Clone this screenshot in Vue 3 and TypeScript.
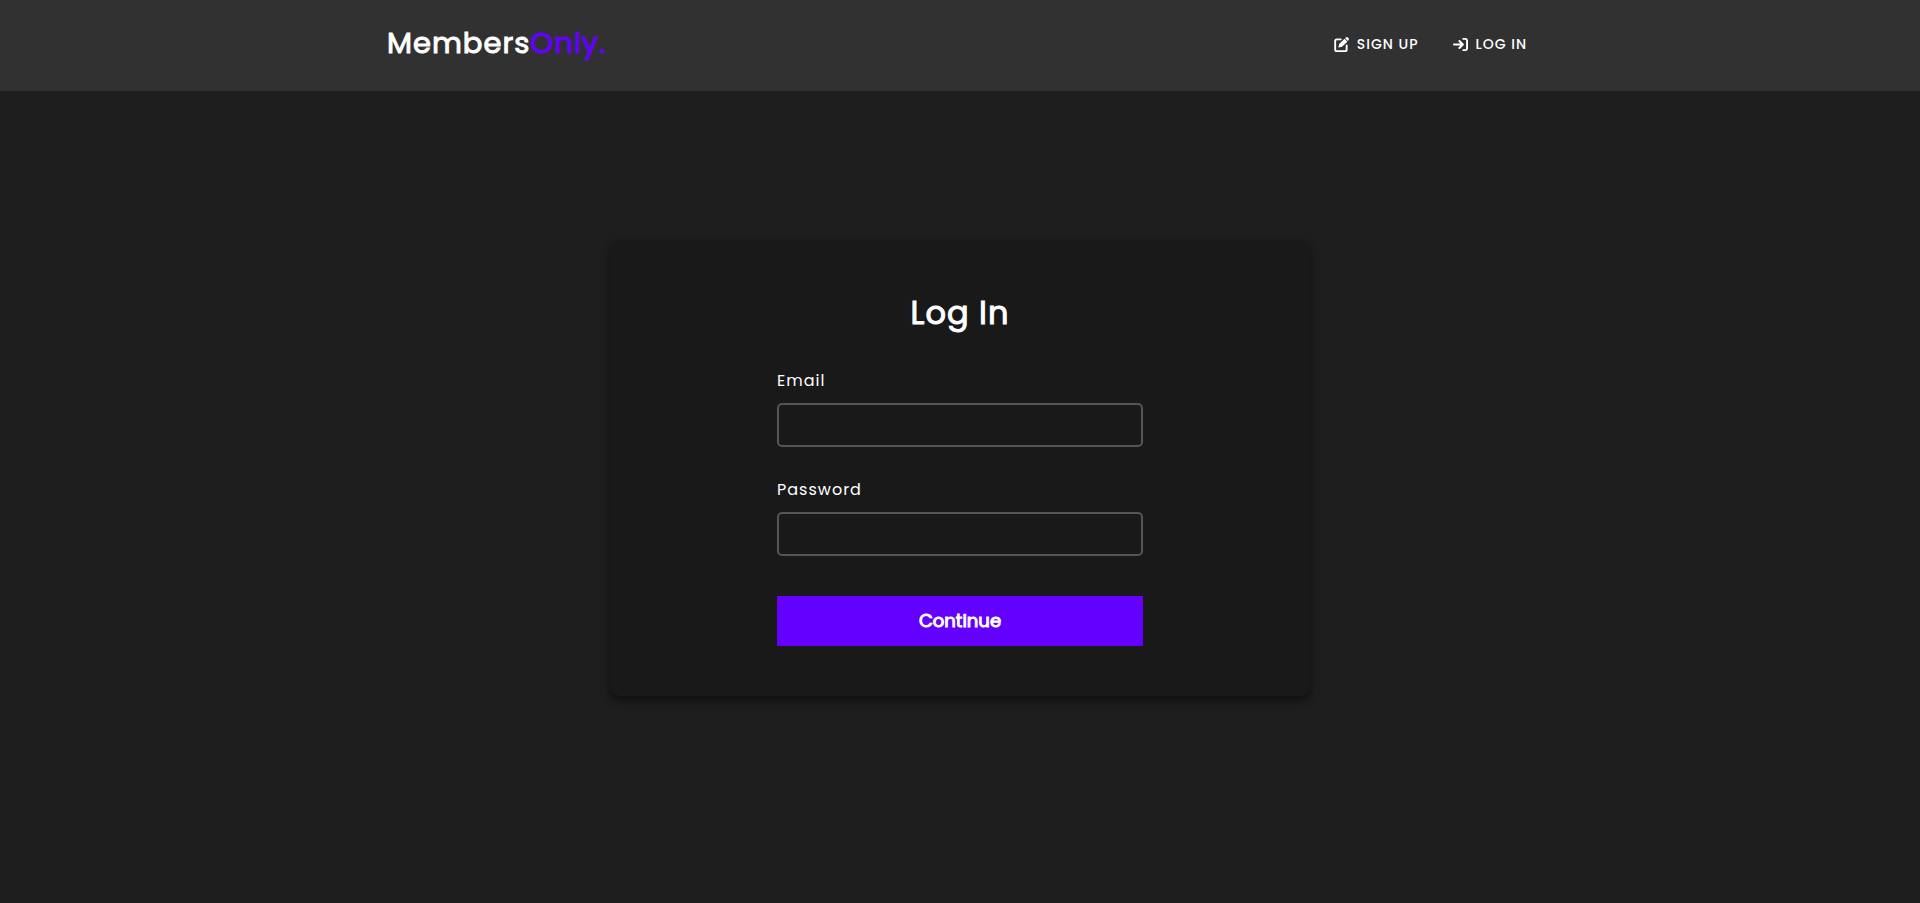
<script setup lang="ts">
import { ref } from 'vue'

const email = ref('')
const password = ref('')
</script>

<template>
  <div class="page">
    <header class="header">
      <div class="bar">
        <a class="logo" href="#">Members<span class="accent">Only.</span></a>
        <nav class="nav">
          <a class="link" href="#signup">
            <svg class="icon" viewBox="0 0 512 512" aria-hidden="true">
              <path d="M232 80H96a56 56 0 0 0-56 56v288a56 56 0 0 0 56 56h280a56 56 0 0 0 56-56V284" fill="none" stroke="currentColor" stroke-width="64" stroke-linecap="round" />
              <path d="M150 362l28-124L358 60l98 98-182 176zM378 42l22-22c22-20 54-20 74 0l18 18c20 20 20 52 0 74l-20 24z" fill="currentColor" />
            </svg>
            <span>SIGN UP</span>
          </a>
          <a class="link" href="#login">
            <svg class="icon" viewBox="0 0 512 512" aria-hidden="true">
              <path d="M32 256h300M218 136l120 120-120 120M352 64h64a64 64 0 0 1 64 64v256a64 64 0 0 1-64 64h-64" fill="none" stroke="currentColor" stroke-width="66" stroke-linecap="round" stroke-linejoin="round" />
            </svg>
            <span>LOG IN</span>
          </a>
        </nav>
      </div>
    </header>
    <main class="main">
      <section class="card">
        <h1 class="title">Log In</h1>
        <form class="form" @submit.prevent>
          <div class="field">
            <label for="email">Email</label>
            <input id="email" v-model="email" type="email" autocomplete="email" />
          </div>
          <div class="field">
            <label for="password">Password</label>
            <input id="password" v-model="password" type="password" autocomplete="current-password" />
          </div>
          <button class="submit" type="submit">Continue</button>
        </form>
      </section>
    </main>
  </div>
</template>

<style>
body {
  margin: 0;
  background: #1e1e1e;
}
</style>

<style scoped>
.page {
  display: flex;
  flex-direction: column;
  min-height: 100vh;
  box-sizing: border-box;
  color: #fff;
  background: #1e1e1e;
  font-family: Poppins, Inter, "Open Sans", sans-serif;
  font-size: 16px;
  line-height: 24px;
}
.header {
  padding: 20px;
  background: #313131;
}
.bar {
  display: flex;
  align-items: flex-start;
  justify-content: space-between;
  max-width: 1146px;
  margin: 0 auto;
  min-height: 51px;
}
.logo {
  color: #fff;
  font-size: 29px;
  font-weight: 400;
  letter-spacing: 1px;
  line-height: 46px;
  text-decoration: none;
  -webkit-text-stroke: 1px currentColor;
}
.accent {
  color: #6400ff;
}
.nav {
  display: flex;
  gap: 34px;
  padding: 12px 6px 0 0;
}
.link {
  display: flex;
  align-items: center;
  gap: 8px;
  color: #fff;
  font-size: 14px;
  font-weight: 500;
  letter-spacing: 1px;
  text-decoration: none;
}
.icon {
  width: 15px;
  height: 15px;
}
.main {
  display: flex;
  flex: 1;
  align-items: center;
  justify-content: center;
  padding: 40px 20px;
}
.card {
  width: 100%;
  max-width: 700px;
  box-sizing: border-box;
  margin-bottom: 58px;
  padding: 49px 20px 50px;
  border-radius: 10px;
  background: #191919;
  box-shadow: 0 5px 8px rgba(0, 0, 0, 0.5);
}
.title {
  margin: 0 0 32px;
  font-size: 32px;
  font-weight: 400;
  letter-spacing: 1px;
  line-height: 48px;
  text-align: center;
  -webkit-text-stroke: 1px currentColor;
}
.form {
  display: flex;
  flex-direction: column;
  max-width: 366px;
  margin: 0 auto;
}
.field {
  display: flex;
  flex-direction: column;
  gap: 10px;
  margin-bottom: 31px;
}
.field label {
  letter-spacing: 1px;
}
.field input {
  width: 100%;
  height: 44px;
  box-sizing: border-box;
  padding: 0 10px;
  border: 2px solid #555;
  border-radius: 5px;
  outline: none;
  background: transparent;
  color: #fff;
  font: inherit;
}
.submit {
  height: 50px;
  margin-top: 9px;
  border: 0;
  background: #6400ff;
  color: #fff;
  font: inherit;
  font-size: 18px;
  font-weight: 400;
  -webkit-text-stroke: 1px currentColor;
  cursor: pointer;
}
</style>
